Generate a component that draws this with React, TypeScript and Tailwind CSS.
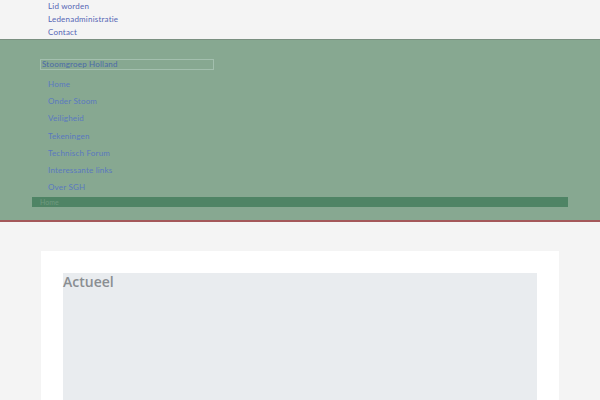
export default function App() {
  const nav = ["Home", "Onder Stoom", "Veiligheid", "Tekeningen", "Technisch Forum", "Interessante links", "Over SGH"];
  return (
    <div className="h-[400px] w-[600px] bg-[#f4f4f4] overflow-hidden" style={{ fontFamily: "Lato, 'Open Sans', 'Liberation Sans', sans-serif" }}>
      <div className="pl-12 flex flex-col text-[8px] leading-[13px] text-[#5566b5] h-[39px] tracking-[0.2px]">
        <span className="h-[13px]">Lid worden</span>
        <span className="h-[13px]">Ledenadministratie</span>
        <span className="h-[13px]">Contact</span>
      </div>
      <div className="bg-[#87a891] border-t border-[#7a8f80] border-b-2 border-b-[#a4585a] h-[183px] pt-[19px] pl-10 pr-8">
        <div className="w-[174px] h-[11px] border border-[#a3bfae] text-[8px] leading-[9px] text-[#4a6aa8] pl-[1px] tracking-[0.2px]">Stoomgroep Holland</div>
        <div className="flex flex-col pl-2 pt-[6px] text-[8px] text-[#5a78c0] tracking-[0.2px]">
          {nav.map((n) => (
            <span key={n} className="h-[17.2px] leading-[17px]">{n}</span>
          ))}
        </div>
        <div className="-ml-2 mt-[1px] h-[10px] bg-[#4f8465] text-[7px] leading-[10px] text-[#6f9a80] pl-2">Home</div>
      </div>
      <div className="pt-[29px] px-[41px]">
        <div className="bg-white pt-[22px] px-[22px] h-[150px] flex flex-col">
          <div className="bg-[#e9ecef] flex-1 pt-[1px]">
            <h1 className="text-[14px] font-semibold text-[#8a8e92] leading-[16px]" style={{ fontFamily: "'Open Sans', 'Liberation Sans', sans-serif" }}>Actueel</h1>
          </div>
        </div>
      </div>
    </div>
  );
}
